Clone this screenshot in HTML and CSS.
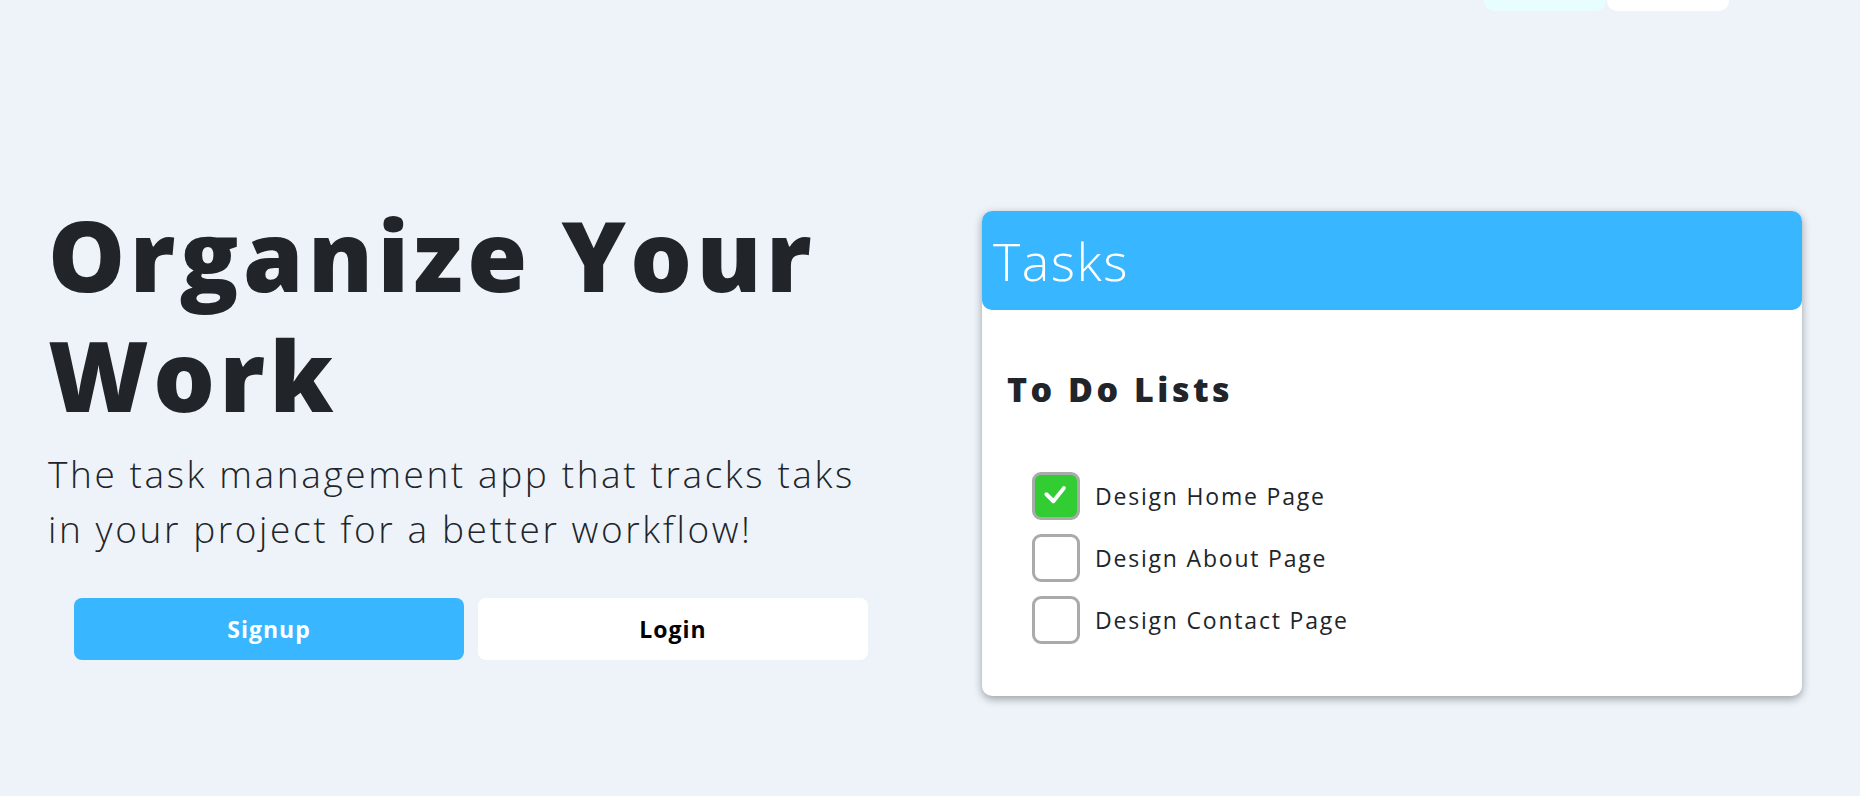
FILE: index.html
```html
<!DOCTYPE html>
<html lang="en">
<head>
<meta charset="utf-8">
<title>Organize Your Work</title>
<link rel="stylesheet" href="styles.css">
</head>
<body>
<nav class="topnav">
  <a class="nav-btn nav-btn-cyan" href="#"></a>
  <a class="nav-btn nav-btn-white" href="#"></a>
</nav>
<main class="hero">
  <section class="hero-text">
    <h1 class="title">Organize Your Work</h1>
    <p class="lead">The task management app that tracks taks in your project for a better workflow!</p>
    <div class="actions">
      <a class="btn btn-primary" href="#">Signup</a>
      <a class="btn btn-light" href="#">Login</a>
    </div>
  </section>
  <section class="hero-card">
    <div class="card">
      <div class="card-header">Tasks</div>
      <div class="card-body">
        <h2 class="card-title">To Do Lists</h2>
        <ul class="todo">
          <li class="todo-item">
            <span class="box box-checked">
              <svg viewBox="0 0 48 48" width="42" height="42"><polyline points="13,22 21,30 33,15" fill="none" stroke="#fff" stroke-width="4.5" stroke-linecap="round" stroke-linejoin="round"/></svg>
            </span>
            <span class="todo-label">Design Home Page</span>
          </li>
          <li class="todo-item">
            <span class="box"></span>
            <span class="todo-label">Design About Page</span>
          </li>
          <li class="todo-item">
            <span class="box"></span>
            <span class="todo-label">Design Contact Page</span>
          </li>
        </ul>
      </div>
    </div>
  </section>
</main>
</body>
</html>
```

FILE: styles.css
```css
* { box-sizing: border-box; }

html, body {
  margin: 0;
  height: 796px;
  overflow: hidden;
}

body {
  background: #edf3f9;
  font-family: "Open Sans", "Noto Sans", sans-serif;
  color: #212529;
}

.topnav {
  display: flex;
  justify-content: flex-end;
  gap: 1px;
  padding-right: 131px;
  margin-top: -40px;
  height: 51px;
}

.nav-btn {
  display: block;
  width: 122px;
  height: 51px;
  border-radius: 10px;
}
.nav-btn-cyan { background: #e8fdfd; }
.nav-btn-white { background: #ffffff; }

.hero {
  display: flex;
  align-items: flex-start;
  padding: 0 58px 0 48px;
}

.hero-text {
  width: 934px;
  padding-top: 183px;
}

.title {
  margin: 0;
  max-width: 860px;
  font-family: "Open Sans", sans-serif;
  font-weight: 800;
  font-size: 97px;
  line-height: 120px;
  letter-spacing: 4.5px;
  color: #212529;
}

.lead {
  margin: 12px 0 0;
  font-family: "Open Sans", sans-serif;
  font-weight: 300;
  font-size: 37px;
  line-height: 55px;
  letter-spacing: 2.6px;
  width: 840px;
  color: #212529;
}

.actions {
  display: flex;
  gap: 14px;
  margin-top: 42px;
  padding-left: 26px;
}

.btn {
  display: flex;
  align-items: center;
  justify-content: center;
  width: 390px;
  height: 62px;
  border-radius: 8px;
  font-size: 23px;
  font-weight: 700;
  letter-spacing: 1px;
  text-decoration: none;
}
.btn-primary { background: #38b6ff; color: #ffffff; }
.btn-light { background: #ffffff; color: #000000; }

.hero-card {
  padding-top: 200px;
}

.card {
  width: 820px;
  height: 485px;
  background: #ffffff;
  border-radius: 10px;
  box-shadow: 0 3px 8px rgba(0, 0, 0, 0.35);
}

.card-header {
  height: 99px;
  background: #38b6ff;
  border-radius: 10px;
  color: #ffffff;
  font-weight: 300;
  font-size: 52px;
  line-height: 99px;
  letter-spacing: 1.5px;
  padding-left: 11px;
}

.card-body {
  padding: 57px 25px 0;
}

.card-title {
  margin: 0;
  font-family: "Open Sans", sans-serif;
  font-weight: 800;
  font-size: 34px;
  line-height: 44px;
  letter-spacing: 3.5px;
  color: #212529;
}

.todo {
  list-style: none;
  margin: 61px 0 0;
  padding: 0 0 0 25px;
  display: flex;
  flex-direction: column;
  gap: 14px;
}

.todo-item {
  display: flex;
  align-items: center;
  gap: 15px;
  height: 48px;
}

.box {
  width: 48px;
  height: 48px;
  border: 3px solid #aaaaaa;
  border-radius: 9px;
  background: #ffffff;
  display: flex;
  align-items: center;
  justify-content: center;
  flex: none;
}
.box-checked { background: #32cd32; }

.todo-label {
  font-size: 23px;
  font-weight: 400;
  letter-spacing: 1.8px;
  color: #212529;
}
```
